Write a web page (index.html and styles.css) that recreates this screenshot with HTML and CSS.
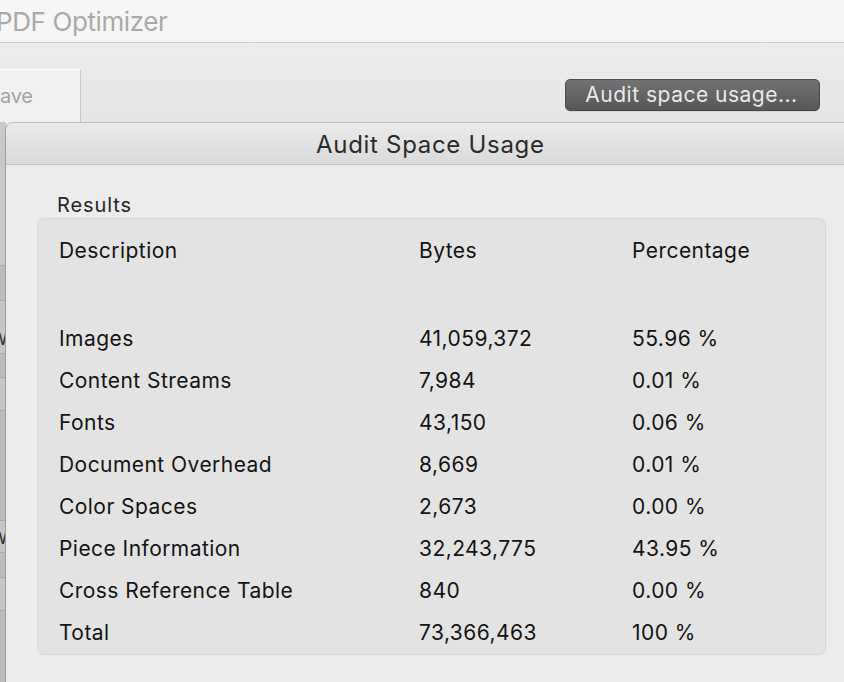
FILE: index.html
```html
<!DOCTYPE html>
<html>
<head>
<meta charset="utf-8">
<link rel="stylesheet" href="styles.css">
</head>
<body>
<div class="app">
  <div class="titlebar"><span class="app-title">PDF Optimizer</span></div>
  <div class="toolbar">
    <div class="tab"><span>ave</span></div>
    <button class="audit-btn">Audit space usage...</button>
  </div>
  <div class="list">
    <div class="lrow h143"></div>
    <div class="lrow h35 alt"></div>
    <div class="lrow h53"><span class="frag">w</span></div>
    <div class="lrow h24 alt"></div>
    <div class="lrow h33"></div>
    <div class="lrow h110 alt"></div>
    <div class="lrow h32"><span class="frag">w</span></div>
    <div class="lrow h25 alt"></div>
    <div class="lrow h33"></div>
    <div class="lrow h72 alt"></div>
  </div>

  <div class="sheet">
    <div class="sheet-title">Audit Space Usage</div>
    <div class="sheet-body">
      <div class="group-label">Results</div>
      <div class="results">
        <div class="cell head">Description</div><div class="cell head">Bytes</div><div class="cell head">Percentage</div>
        <div class="spacer"></div>
        <div class="cell">Images</div><div class="cell">41,059,372</div><div class="cell">55.96 %</div>
        <div class="cell">Content Streams</div><div class="cell">7,984</div><div class="cell">0.01 %</div>
        <div class="cell">Fonts</div><div class="cell">43,150</div><div class="cell">0.06 %</div>
        <div class="cell">Document Overhead</div><div class="cell">8,669</div><div class="cell">0.01 %</div>
        <div class="cell">Color Spaces</div><div class="cell">2,673</div><div class="cell">0.00 %</div>
        <div class="cell">Piece Information</div><div class="cell">32,243,775</div><div class="cell">43.95 %</div>
        <div class="cell">Cross Reference Table</div><div class="cell">840</div><div class="cell">0.00 %</div>
        <div class="cell">Total</div><div class="cell">73,366,463</div><div class="cell">100 %</div>
      </div>
    </div>
  </div>
</div>
</body>
</html>
```

FILE: styles.css
```css
html, body {
  margin: 0;
  padding: 0;
  width: 844px;
  height: 682px;
  overflow: hidden;
  background: #ececec;
  font-family: Inter, "Noto Sans", sans-serif;
}

.app {
  position: relative;
  width: 844px;
  height: 682px;
  overflow: hidden;
  background: #ececec;
}

.titlebar {
  height: 43px;
  background: #f6f6f6;
  border-bottom: 1px solid #cfcfcf;
  box-sizing: border-box;
  display: flex;
  align-items: center;
}

.app-title {
  margin-left: -4px;
  margin-top: 1px;
  font-size: 26px;
  color: #a9a9a9;
  letter-spacing: -0.4px;
}

.toolbar {
  height: 79px;
  display: flex;
  justify-content: space-between;
  align-items: flex-start;
  background: linear-gradient(#ececec, #e6e6e6);
}

.tab {
  margin-top: 26px;
  margin-left: -20px;
  width: 101px;
  height: 60px;
  box-sizing: border-box;
  background: #f1f1f1;
  border: 1px solid #c9c9c9;
  border-top-color: #ffffff;
  padding-left: 19px;
  padding-top: 14px;
}

.tab span {
  font-size: 20px;
  color: #a3a3a3;
  letter-spacing: -0.3px;
}

.audit-btn {
  margin-top: 36px;
  margin-right: 24px;
  width: 255px;
  height: 32px;
  border: 1px solid #4a4a4a;
  border-radius: 5px;
  background: linear-gradient(#727272, #575757);
  color: #e9e9e9;
  font-family: Inter, "Noto Sans", sans-serif;
  font-size: 21px;
  letter-spacing: 0.5px;
  padding: 0 2px 1px 0;
  box-shadow: 0 1px 0 rgba(0,0,0,0.08);
}

.list {
  width: 6px;
  display: flex;
  flex-direction: column;
}

.lrow {
  background: #c7c7c7;
  border-top: 1px solid #aaaaaa;
  box-sizing: border-box;
  position: relative;
  overflow: hidden;
}
.lrow.alt { background: #bdbdbd; }
.h143 { height: 143px; border-top: none; background: #c9c9c9; }
.h35 { height: 35px; }
.h53 { height: 53px; }
.h24 { height: 24px; }
.h33 { height: 33px; }
.h110 { height: 110px; }
.h32 { height: 32px; }
.h25 { height: 25px; }
.h72 { height: 72px; }

.frag {
  position: absolute;
  right: -2px;
  top: 27px;
  font-size: 21px;
  color: #333;
  line-height: 20px;
}
.h32 .frag { top: 6px; }

.sheet {
  position: absolute;
  left: 5px;
  top: 122px;
  width: 870px;
  height: 600px;
  border-left: 1px solid #9c9c9c;
  border-top: 1px solid #bdbdbd;
  border-top-left-radius: 8px;
  background: #ececec;
  overflow: hidden;
}

.sheet-title {
  height: 42px;
  box-sizing: border-box;
  background: linear-gradient(#ebebeb, #dadada);
  border-bottom: 1px solid #c2c2c2;
  display: flex;
  align-items: center;
  padding-left: 310px;
  padding-top: 2px;
  font-size: 24px;
  letter-spacing: 0.7px;
  color: #2b2b2b;
}

.sheet-body {
  padding-left: 31px;
  width: 789px;
}

.group-label {
  margin-left: 20px;
  height: 53px;
  box-sizing: border-box;
  padding-top: 28px;
  font-size: 20px;
  letter-spacing: 0.9px;
  color: #262626;
  line-height: 24px;
}

.results {
  width: 789px;
  height: 437px;
  box-sizing: border-box;
  background: #e3e3e3;
  border: 1px solid #d7d7d7;
  border-radius: 7px;
  padding: 10px 0 0 21px;
  display: grid;
  grid-template-columns: 360px 213px 1fr;
  grid-template-rows: 42px 46px;
  grid-auto-rows: 42px;
  align-items: center;
}

.cell {
  font-size: 21px;
  letter-spacing: 0.45px;
  color: #141414;
}

.spacer {
  grid-column: 1 / -1;
}
```
